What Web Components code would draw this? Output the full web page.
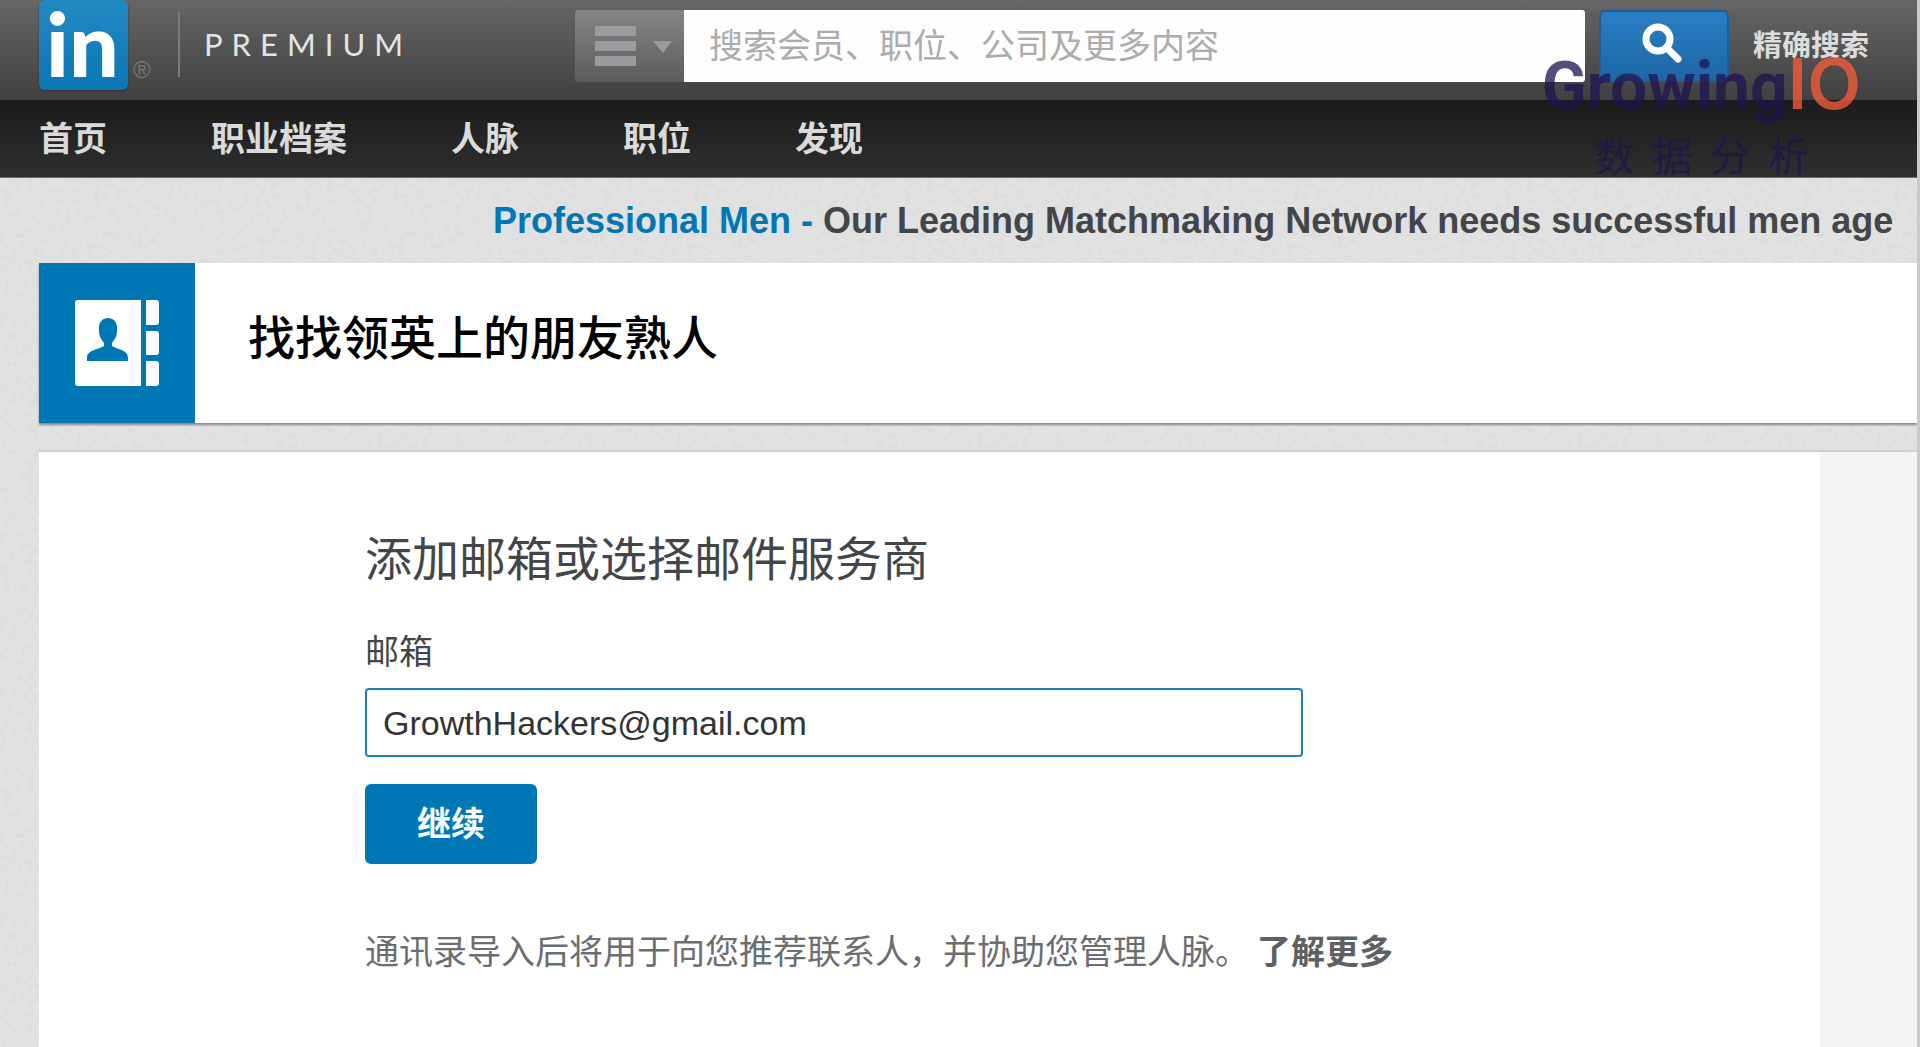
<!DOCTYPE html>
<html lang="zh-CN">
<head>
<meta charset="utf-8">
<meta name="viewport" content="width=device-width, initial-scale=1">
<title>找找领英上的朋友熟人</title>
<style>
  :root {
    --blue: #0077b5;
    --ink: #434649;
    --gutter: 39px;
    --font: "Liberation Sans", "Noto Sans CJK SC", sans-serif;
  }
  * { box-sizing: border-box; }
  body {
    margin: 0;
    min-height: 100vh;
    display: flex;
    flex-direction: column;
    overflow-x: hidden;
    position: relative;
    font-family: var(--font);
    font-size: 34px;
    line-height: 48px;
    color: var(--ink);
    border-right: 3px solid #c9cacb;
    background: #e2e2e2 url("data:image/svg+xml,%3Csvg xmlns='http://www.w3.org/2000/svg' width='300' height='300'%3E%3Cfilter id='n'%3E%3CfeTurbulence type='fractalNoise' baseFrequency='.18' numOctaves='3' stitchTiles='stitch'/%3E%3CfeColorMatrix values='0 0 0 0 .4 0 0 0 0 .4 0 0 0 0 .4 .22 0 0 0 -.08'/%3E%3C/filter%3E%3Crect width='300' height='300' filter='url(%23n)'/%3E%3C/svg%3E");
  }
  find-contacts { flex: 1; }
</style>
</head>
<body>
  <site-header></site-header>
  <site-nav>
    <a href="#home">首页</a>
    <a href="#profile">职业档案</a>
    <a href="#network">人脉</a>
    <a href="#jobs">职位</a>
    <a href="#discover">发现</a>
  </site-nav>
  <text-ad href="#ad">
    <span slot="link">Professional Men -</span>
    Our Leading Matchmaking Network needs successful men age
  </text-ad>
  <page-banner>找找领英上的朋友熟人</page-banner>
  <find-contacts>
    <span slot="title">添加邮箱或选择邮件服务商</span>
    <span slot="note">通讯录导入后将用于向您推荐联系人，并协助您管理人脉。</span>
  </find-contacts>
  <brand-mark></brand-mark>

<script>
class SiteHeader extends HTMLElement {
  constructor() {
    super();
    this.attachShadow({ mode: 'open' });
    this.shadowRoot.innerHTML = `
      <style>
        * { box-sizing: border-box; }
        :host {
          display: flex;
          align-items: flex-start;
          height: 100px;
          padding: 0 48px 0 var(--gutter);
          background: linear-gradient(#666, #404040);
        }
        .brand {
          flex: 0 0 536px;
          display: flex;
          color: #e4e4e4;
          text-decoration: none;
        }
        .logo {
          width: 89px;
          height: 90px;
          border-radius: 6px;
          background: linear-gradient(#2389c2, #0a76b5);
          box-shadow: 0 1px 2px #333;
          overflow: visible;
        }
        .logo text { font: 900 88px Lato, sans-serif; fill: #fff; }
        .reg {
          width: 24px;
          padding-top: 58px;
          padding-left: 5px;
          font-size: 24px;
          line-height: 24px;
          color: #777;
        }
        .premium {
          margin: 12px 0 0 26px;
          padding-left: 24px;
          border-left: 2px solid #7c7c7c;
          height: 65px;
          font-family: Lato, sans-serif;
          font-size: 31px;
          line-height: 65px;
          letter-spacing: 9px;
        }
        form {
          flex: 1;
          display: flex;
          height: 72px;
          margin-top: 10px;
        }
        .scope {
          flex: 0 0 109px;
          display: flex;
          align-items: center;
          justify-content: center;
          padding: 0 0 0 6px;
          border: 0;
          border-radius: 4px 0 0 4px;
          background: linear-gradient(#858585, #5c5c5c);
        }
        input {
          flex: 1;
          min-width: 0;
          padding: 0 25px;
          border: 0;
          border-radius: 0 3px 3px 0;
          background: #fdfdfd;
          color: #434649;
          font: inherit;
        }
        input::placeholder { color: #acacac; opacity: 1; }
        .go {
          flex: 0 0 130px;
          display: flex;
          align-items: center;
          justify-content: center;
          margin-left: 14px;
          padding: 0 4px 6px 0;
          border: 2px solid #1d5f99;
          border-radius: 6px;
          background: linear-gradient(#2a7fc2, #1d66a6);
        }
        .advanced {
          margin: 22px 0 0 24px;
          font-size: 29px;
          font-weight: bold;
          color: #dcdcdc;
          text-decoration: none;
        }
      </style>
      <a class="brand" href="#home">
        <svg class="logo" viewBox="0 0 89 90" role="img" aria-label="LinkedIn"><text x="7" y="77">in</text></svg>
        <span class="reg">®</span>
        <span class="premium">PREMIUM</span>
      </a>
      <form>
        <button class="scope" type="button" aria-label="搜索范围">
          <svg width="80" height="42" viewBox="0 0 80 42" fill="#999b9e">
            <path d="M2 1h41v10H2zM2 16h41v10H2zM2 31h41v10H2zM60 16h19l-9 12z"/>
          </svg>
        </button>
        <input type="search" placeholder="搜索会员、职位、公司及更多内容" aria-label="搜索">
        <button class="go" type="submit" aria-label="提交搜索">
          <svg width="42" height="42" viewBox="0 0 42 42" fill="none" stroke="#fff">
            <circle cx="17" cy="17" r="12" stroke-width="7"/>
            <path d="M26 26l11 11" stroke-width="7" stroke-linecap="round"/>
          </svg>
        </button>
      </form>
      <a class="advanced" href="#advanced">精确搜索</a>`;
  }
}

class SiteNav extends HTMLElement {
  constructor() {
    super();
    this.attachShadow({ mode: 'open' });
    this.shadowRoot.innerHTML = `
      <style>
        :host { display: block; }
        nav {
          display: flex;
          align-items: center;
          gap: 104px;
          height: 77px;
          padding: 0 var(--gutter);
          background: linear-gradient(#1b1b1b, #2f2f2f);
          border-bottom: 1px solid #6a6a6a;
        }
        ::slotted(a) {
          color: #dadada;
          font-weight: bold;
          text-decoration: none;
        }
      </style>
      <nav><slot></slot></nav>`;
  }
}

class TextAd extends HTMLElement {
  constructor() {
    super();
    this.attachShadow({ mode: 'open' });
    this.shadowRoot.innerHTML = `
      <style>
        :host {
          display: block;
          padding: 19px 0 18px 493px;
          overflow: hidden;
          white-space: nowrap;
          font-size: 36px;
          font-weight: bold;
        }
        a { color: var(--blue); text-decoration: none; }
      </style>
      <a><slot name="link"></slot></a> <slot></slot>`;
  }

  connectedCallback() {
    this.shadowRoot.querySelector('a').href = this.getAttribute('href');
  }
}

class PageBanner extends HTMLElement {
  constructor() {
    super();
    this.attachShadow({ mode: 'open' });
    this.shadowRoot.innerHTML = `
      <style>
        :host {
          display: flex;
          height: 160px;
          margin-left: var(--gutter);
          background: #fff;
          box-shadow: 0 2px 2px #888;
        }
        .icon {
          flex: 0 0 156px;
          display: flex;
          align-items: center;
          justify-content: center;
          background: var(--blue);
        }
        h1 {
          margin: 0;
          padding: 0 53px;
          font-size: 47px;
          font-weight: 500;
          line-height: 152px;
          color: #000;
        }
      </style>
      <div class="icon">
        <svg width="84" height="86" viewBox="0 0 84 86" fill="#fff">
          <path d="M3 0h63v86H3a3 3 0 0 1-3-3V3a3 3 0 0 1 3-3zM71 0h10a3 3 0 0 1 3 3v19a3 3 0 0 1-3 3H71zM71 31h10a3 3 0 0 1 3 3v18a3 3 0 0 1-3 3H71zM71 61h10a3 3 0 0 1 3 3v19a3 3 0 0 1-3 3H71z"/>
          <path fill="#0077b5" d="M33 18c6 0 10 5 9 13 0 6-3 9-5 12v3c7 4 16 4 16 12v3H12v-3c0-8 10-8 17-12v-3c-2-3-5-6-5-12-1-8 3-13 9-13z"/>
        </svg>
      </div>
      <h1><slot></slot></h1>`;
  }
}

class FindContacts extends HTMLElement {
  constructor() {
    super();
    this.attachShadow({ mode: 'open' });
    this.shadowRoot.innerHTML = `
      <style>
        * { box-sizing: border-box; }
        :host {
          display: flex;
          margin: 27px 0 0 var(--gutter);
          border-top: 2px solid #cdcfd2;
          background: #fff;
        }
        main { flex: 1; padding: 76px 80px 40px 326px; }
        aside { flex: 0 0 97px; background: #f1f3f5; }
        h2 {
          margin: 0 0 36px;
          font-size: 47px;
          font-weight: normal;
          line-height: 64px;
        }
        label { display: block; margin-bottom: 12px; }
        input {
          display: block;
          width: 100%;
          max-width: 938px;
          height: 69px;
          padding: 2px 16px 0;
          border: 2px solid #1c80b4;
          border-radius: 4px;
          background: #fff;
          color: #333;
          font: inherit;
          outline: 0;
        }
        button {
          display: block;
          margin: 27px 0 64px;
          padding: 16px 52px;
          border: 0;
          border-radius: 6px;
          background: var(--blue);
          color: #fff;
          font: inherit;
          font-weight: bold;
        }
        p { margin: 0; color: #6b6d70; }
        p a {
          margin-left: 8px;
          color: #5e6063;
          font-weight: bold;
          text-decoration: none;
        }
      </style>
      <main>
        <h2><slot name="title"></slot></h2>
        <form>
          <label for="email">邮箱</label>
          <input id="email" type="email" value="GrowthHackers@gmail.com">
          <button type="submit">继续</button>
        </form>
        <p><slot name="note"></slot><a href="#more">了解更多</a></p>
      </main>
      <aside></aside>`;
  }
}

/* translucent mark laid over the header */
class BrandMark extends HTMLElement {
  constructor() {
    super();
    this.attachShadow({ mode: 'open' });
    this.shadowRoot.innerHTML = `
      <style>
        :host {
          position: absolute;
          top: 48px;
          right: 56px;
          opacity: .75;
          pointer-events: none;
          color: #21134f;
          text-align: center;
        }
        .name { font: bold 66px/72px Roboto, sans-serif; }
        .name b { font: 600 70px/72px Inter, sans-serif; color: #fb5c3a; }
        .sub {
          font-size: 40px;
          line-height: 48px;
          letter-spacing: 18px;
          padding: 10px 0 0 18px;
        }
      </style>
      <div class="name">Growing<b>IO</b></div>
      <div class="sub">数据分析</div>`;
  }
}

customElements.define('site-header', SiteHeader);
customElements.define('site-nav', SiteNav);
customElements.define('text-ad', TextAd);
customElements.define('page-banner', PageBanner);
customElements.define('find-contacts', FindContacts);
customElements.define('brand-mark', BrandMark);
</script>
</body>
</html>
